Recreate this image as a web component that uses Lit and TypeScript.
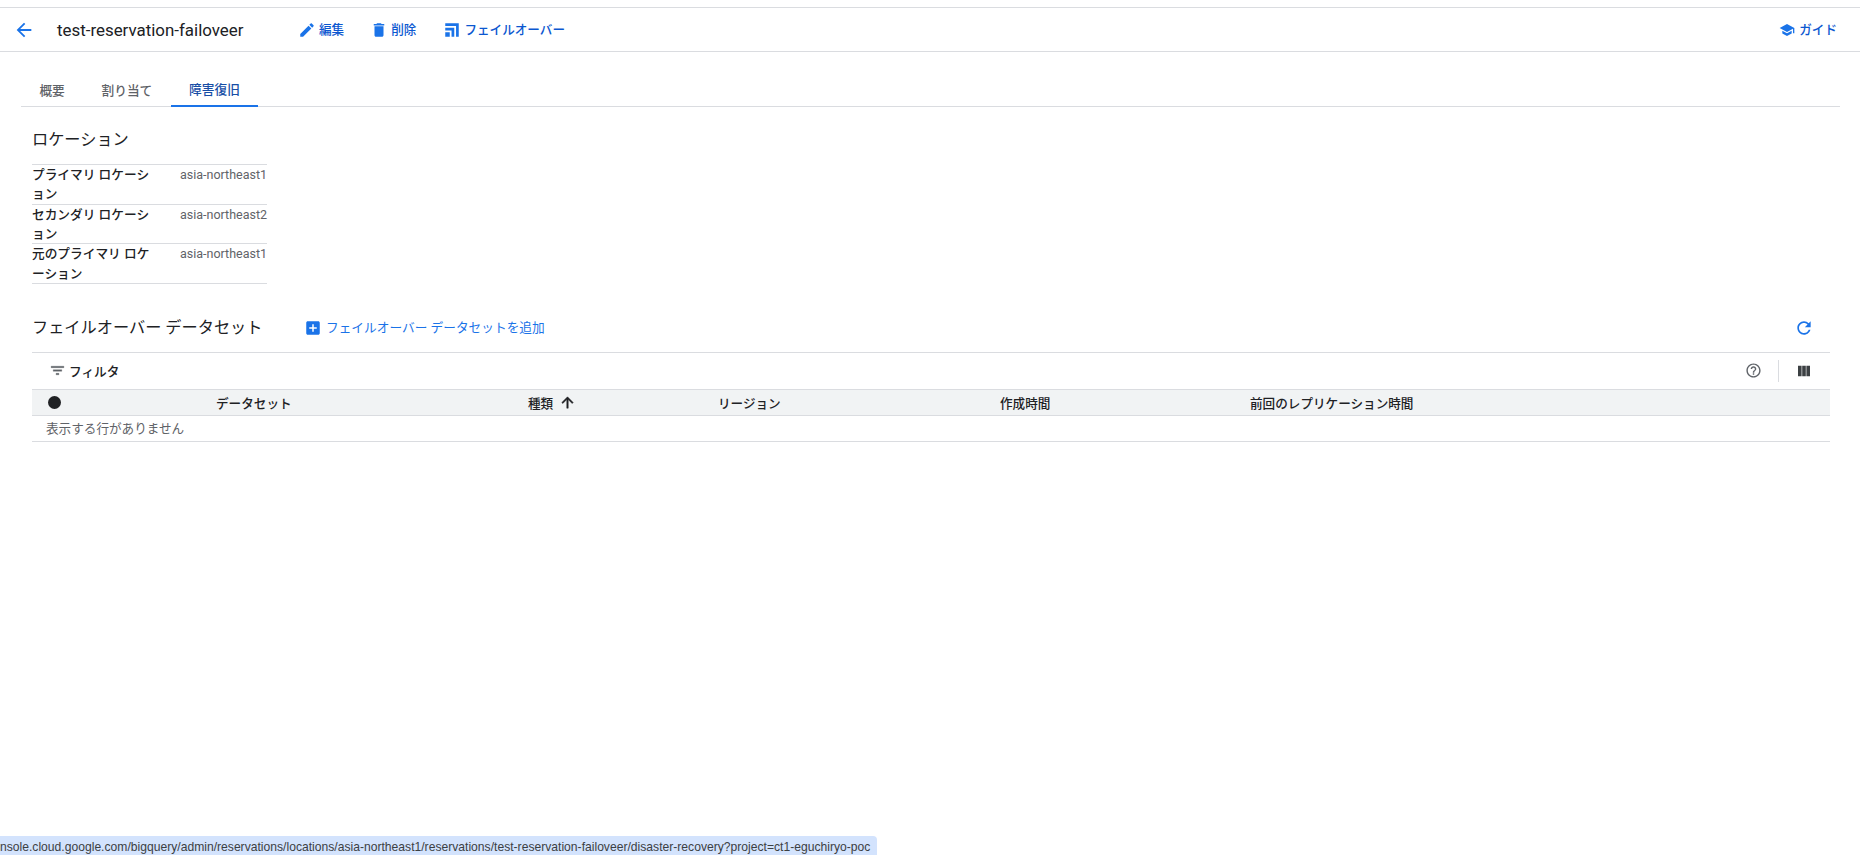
import { LitElement, html, css, svg } from "lit";
import { customElement } from "lit/decorators.js";

const ic = (d: unknown, cls = "") => html`<svg class="ic ${cls}" viewBox="0 0 24 24" fill="currentColor">${d}</svg>`;
const P = {
  back: svg`<path d="M20 11H7.83l5.59-5.59L12 4l-8 8 8 8 1.41-1.41L7.83 13H20v-2z"/>`,
  edit: svg`<path d="M3 17.25V21h3.75L17.81 9.94l-3.75-3.75L3 17.25zM20.71 7.04c.39-.39.39-1.02 0-1.41l-2.34-2.34c-.39-.39-1.02-.39-1.41 0l-1.83 1.83 3.75 3.75 1.83-1.83z"/>`,
  del: svg`<path d="M6 19c0 1.1.9 2 2 2h8c1.1 0 2-.9 2-2V7H6v12zM19 4h-3.5l-1-1h-5l-1 1H5v2h14V4z"/>`,
  fail: svg`<path d="M3 3h18v18h-3.6V6.6H3zM3 9h12v12h-3.6V12.6H3zM3 15h6v6H3z"/>`,
  school: svg`<path d="M5 13.18v4L12 21l7-3.82v-4L12 17l-7-3.82zM12 3L1 9l11 6 9-4.91V17h2V9L12 3z"/>`,
  add: svg`<path d="M19 3H5c-1.11 0-2 .9-2 2v14c0 1.1.89 2 2 2h14c1.1 0 2-.9 2-2V5c0-1.1-.9-2-2-2zm-2 10h-4v4h-2v-4H7v-2h4V7h2v4h4v2z"/>`,
  refresh: svg`<path d="M17.65 6.35C16.2 4.9 14.21 4 12 4c-4.42 0-7.99 3.58-7.99 8s3.57 8 7.99 8c3.73 0 6.84-2.55 7.73-6h-2.08c-.82 2.33-3.04 4-5.65 4-3.31 0-6-2.69-6-6s2.69-6 6-6c1.66 0 3.14.69 4.22 1.78L13 11h7V4l-2.35 2.35z"/>`,
  filter: svg`<path d="M10 18h4v-2h-4v2zM3 6v2h18V6H3zm3 7h12v-2H6v2z"/>`,
  help: svg`<path d="M11 18h2v-2h-2v2zm1-16C6.48 2 2 6.48 2 12s4.48 10 10 10 10-4.48 10-10S17.52 2 12 2zm0 18c-4.41 0-8-3.59-8-8s3.59-8 8-8 8 3.59 8 8-3.59 8-8 8zm0-14c-2.21 0-4 1.79-4 4h2c0-1.1.9-2 2-2s2 .9 2 2c0 2-3 1.75-3 5h2c0-2.25 3-2.5 3-5 0-2.21-1.79-4-4-4z"/>`,
  cols: svg`<path d="M3 4h5.4v16H3zM9.3 4h5.4v16H9.3zM15.6 4H21v16h-5.4z"/>`,
  up: svg`<path d="M4 12l1.41 1.41L11 7.83V20h2V7.83l5.58 5.59L20 12l-8-8-8 8z"/>`,
};

@customElement("app-root")
export class AppRoot extends LitElement {
  static styles = css`
    :host {
      display: flex;
      flex-direction: column;
      position: relative;
      height: 855px;
      overflow: hidden;
      background: #fff;
      color: #202124;
      font-family: Roboto, "Noto Sans CJK JP", sans-serif;
      font-size: 12.6px;
    }
    .ic { width: 18px; height: 18px; flex: none; display: block; }
    .chrome { height: 7px; flex: none; border-bottom: 1px solid #dadce0; }
    .header {
      height: 43px; flex: none; display: flex; align-items: center;
      border-bottom: 1px solid #dadce0; padding: 0 23px 0 13px;
    }
    .back { color: #1a73e8; margin-right: 22px; }
    .back .ic { width: 22px; height: 22px; }
    .title { font-size: 16.9px; width: 186px; white-space: nowrap; margin-right: 55px; color: #202124; }
    .btn {
      display: flex; align-items: center; gap: 3px; color: #0b57d0;
      font-weight: 500; font-size: 12.6px; white-space: nowrap;
    }
    .header .btn span { padding-bottom: 2px; }
    .btn .ic { color: #1a73e8; }
    .b1 { margin-right: 26px; }
    .b2 { margin-right: 27px; }
    .guide { gap: 4px; }
    .guide .ic { width: 16px; height: 16px; }
    .spacer { flex: 1; }
    .main { flex: 1; padding: 0 20px 0 21px; display: flex; flex-direction: column; }
    .tabs { display: flex; margin-top: 20px; height: 34px; border-bottom: 1px solid #dadce0; }
    .tab {
      padding: 0 18.4px; display: flex; align-items: center; color: #5f6368;
      font-weight: 500; font-size: 12.7px; box-sizing: border-box; margin-bottom: -1px;
      border-bottom: 1px solid transparent;
    }
    .tab.on { color: #174ea6; border-bottom: 2px solid #1a73e8; }
    .body { padding: 0 0 0 11px; margin-right: 10px; }
    .h2 { font-size: 16.2px; font-weight: 400; line-height: 24px; margin: 0; color: #202124; }
    .loc { margin-top: 21px; }
    .kv { width: 235px; margin-top: 12px; border-top: 1px solid #dadce0; }
    .kv-row { display: grid; grid-template-columns: 148px 1fr; border-bottom: 1px solid #dadce0; line-height: 19.33px; }
    .kv-k { font-weight: 500; color: #202124; font-size: 12.7px; padding-right: 26px; }
    .kv-v { color: #5f6368; font-size: 12.5px; white-space: nowrap; }
    .ds-head { display: flex; align-items: center; margin-top: 32px; height: 24px; padding-right: 16px; }
    .ds-head .h2 { width: 272px; white-space: nowrap; padding-top: 1px; }
    .add { font-weight: 400; color: #1a73e8; font-size: 12.7px; gap: 4px; }
    .add span { padding-bottom: 2px; }
    .refresh { color: #1a73e8; }
    .refresh .ic { width: 20px; height: 20px; }
    .filterbar {
      margin-top: 12px; height: 36px; display: flex; align-items: center; padding: 0 18px 0 17px;
      border-top: 1px solid #dadce0; border-bottom: 1px solid #dadce0;
    }
    .fl { display: flex; align-items: center; gap: 3px; font-weight: 500; font-size: 12.7px; }
    .fl .ic { width: 17px; height: 17px; color: #5f6368; stroke: currentColor; stroke-width: .5; }
    .help { color: #5f6368; }
    .help .ic { width: 17px; height: 17px; }
    .sep { width: 1px; height: 22px; background: #dadce0; margin: 0 17px 0 16px; }
    .cols { color: #3c4043; }
    .cols .ic { width: 16px; height: 16px; }
    .thead {
      display: grid; grid-template-columns: 184px 312px 190px 282px 250px 1fr;
      height: 25px; align-items: center; background: #f1f3f4;
      border-bottom: 1px solid #dadce0; font-weight: 500; color: #202124;
    }
    .dot { display: block; width: 13px; height: 13px; border-radius: 50%; background: #202124; margin-left: 16px; }
    .sorted { display: flex; align-items: center; gap: 6px; }
    .sorted .ic { width: 17px; height: 17px; stroke: currentColor; stroke-width: .7; }
    .empty { height: 25px; line-height: 25px; padding-left: 14px; color: #5f6368; border-bottom: 1px solid #dadce0; }
    .status {
      position: absolute; left: 0; bottom: 0; width: 877px; height: 19px; background: #d3e3fd;
      border-top-right-radius: 4px; display: flex; align-items: center; padding-top: 3px;
      overflow: hidden; font-family: "Liberation Sans", sans-serif; font-size: 12.13px; color: #3c4043;
      box-sizing: border-box; white-space: nowrap;
    }
  `;

  render() {
    return html`
      <div class="chrome"></div>
      <header class="header">
        <div class="back">${ic(P.back)}</div>
        <div class="title">test-reservation-failoveer</div>
        <div class="btn b1">${ic(P.edit)}<span>編集</span></div>
        <div class="btn b2">${ic(P.del)}<span>削除</span></div>
        <div class="btn">${ic(P.fail)}<span>フェイルオーバー</span></div>
        <div class="spacer"></div>
        <div class="btn guide">${ic(P.school)}<span>ガイド</span></div>
      </header>
      <div class="main">
        <nav class="tabs">
          <div class="tab">概要</div>
          <div class="tab">割り当て</div>
          <div class="tab on">障害復旧</div>
        </nav>
        <div class="body">
          <section class="loc">
            <h2 class="h2">ロケーション</h2>
            <div class="kv">
              <div class="kv-row"><div class="kv-k">プライマリ ロケーション</div><div class="kv-v">asia-northeast1</div></div>
              <div class="kv-row"><div class="kv-k">セカンダリ ロケーション</div><div class="kv-v">asia-northeast2</div></div>
              <div class="kv-row"><div class="kv-k">元のプライマリ ロケーション</div><div class="kv-v">asia-northeast1</div></div>
            </div>
          </section>
          <section>
            <div class="ds-head">
              <h2 class="h2">フェイルオーバー データセット</h2>
              <div class="btn add">${ic(P.add)}<span>フェイルオーバー データセットを追加</span></div>
              <div class="spacer"></div>
              <div class="refresh">${ic(P.refresh)}</div>
            </div>
            <div class="filterbar">
              <div class="fl">${ic(P.filter)}<span>フィルタ</span></div>
              <div class="spacer"></div>
              <div class="help">${ic(P.help)}</div>
              <div class="sep"></div>
              <div class="cols">${ic(P.cols)}</div>
            </div>
            <div class="thead">
              <div><span class="dot"></span></div>
              <div>データセット</div>
              <div class="sorted"><span>種類</span>${ic(P.up)}</div>
              <div>リージョン</div>
              <div>作成時間</div>
              <div>前回のレプリケーション時間</div>
            </div>
            <div class="empty">表示する行がありません</div>
          </section>
        </div>
      </div>
      <div class="status">nsole.cloud.google.com/bigquery/admin/reservations/locations/asia-northeast1/reservations/test-reservation-failoveer/disaster-recovery?project=ct1-eguchiryo-poc</div>
    `;
  }
}
